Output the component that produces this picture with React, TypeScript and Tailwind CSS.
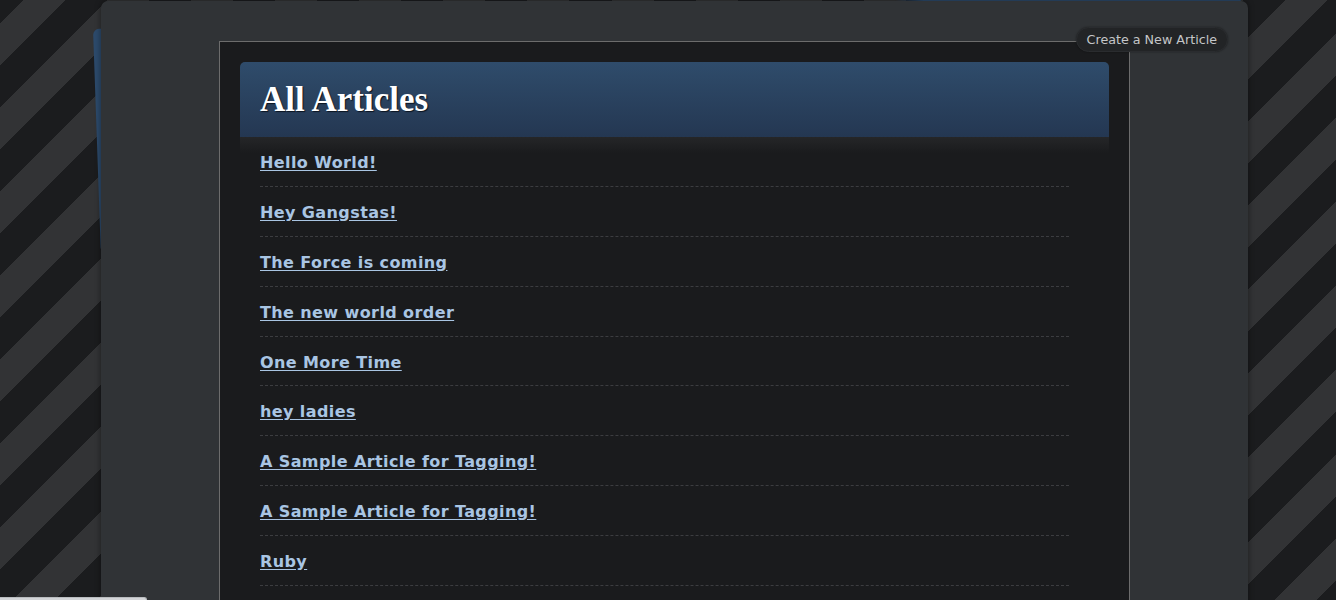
import React from "react";

const articles = [
  "Hello World!",
  "Hey Gangstas!",
  "The Force is coming",
  "The new world order",
  "One More Time",
  "hey ladies",
  "A Sample Article for Tagging!",
  "A Sample Article for Tagging!",
  "Ruby",
];

export default function App() {
  return (
    <div className="relative h-screen w-full overflow-hidden bg-[repeating-linear-gradient(135deg,#1b1c1e_0px,#1b1c1e_16.3px,#323335_16.3px,#323335_46px,#1b1c1e_46px,#1b1c1e_59.5px)]">
      {/* rotated blue card behind the panel */}
      <div className="absolute left-[93px] top-[29px] h-[225px] w-[1148px] origin-top-left -rotate-2 rounded-md bg-[#2c4a6b]" />

      <div className="relative ml-[101px] mt-[1px] w-[1147px] rounded-t-[7px] bg-[#303336] px-[118px] pb-10 pt-[40px] shadow-[0_0_6px_rgba(0,0,0,0.45)]">
        <a
          href="#"
          className="absolute right-[20px] top-[26px] z-10 flex h-[25px] items-center rounded-full border border-[#2a2c2f] bg-[#222426] px-[10px] text-[12.7px] text-[#c4c6c8] [font-family:'DejaVu_Sans',Verdana,sans-serif] shadow-[0_0_2px_rgba(0,0,0,0.4)]"
        >
          Create a New Article
        </a>

        <div className="border border-[#6c6c6c] bg-[#1a1b1d] p-[20px]">
          <div className="flex h-[76px] items-center rounded-t-[5px] border-b border-[#3b3c39] bg-[linear-gradient(#2f4c6b,#243752)] px-[20px]">
            <h1 className="text-[35px] font-bold leading-none text-white [font-family:'Liberation_Serif','Times_New_Roman',serif] [text-shadow:1px_1px_1px_#0b1420]">
              All Articles
            </h1>
          </div>
          <ul className="-mt-px bg-[linear-gradient(#252628,#1a1b1d_16px)] pl-[20px] pr-[40px]">
            {articles.map((t, i) => (
              <li
                key={i}
                className="border-b border-dashed border-[#3c3d40] pb-[12px] pt-[16px] text-[16px] font-bold leading-[20.875px] tracking-[0.4px] [font-family:'DejaVu_Sans',Verdana,sans-serif]"
              >
                <a href="#" className="text-[#a9c5e3] underline underline-offset-2">
                  {t}
                </a>
              </li>
            ))}
          </ul>
        </div>
      </div>

      {/* status bar peeking at bottom-left */}
      <div className="absolute bottom-0 left-0 h-[3px] w-[147px] rounded-tr-[3px] border-r border-t border-[#b9bcbf] bg-[#d3d5d8]" />
    </div>
  );
}
